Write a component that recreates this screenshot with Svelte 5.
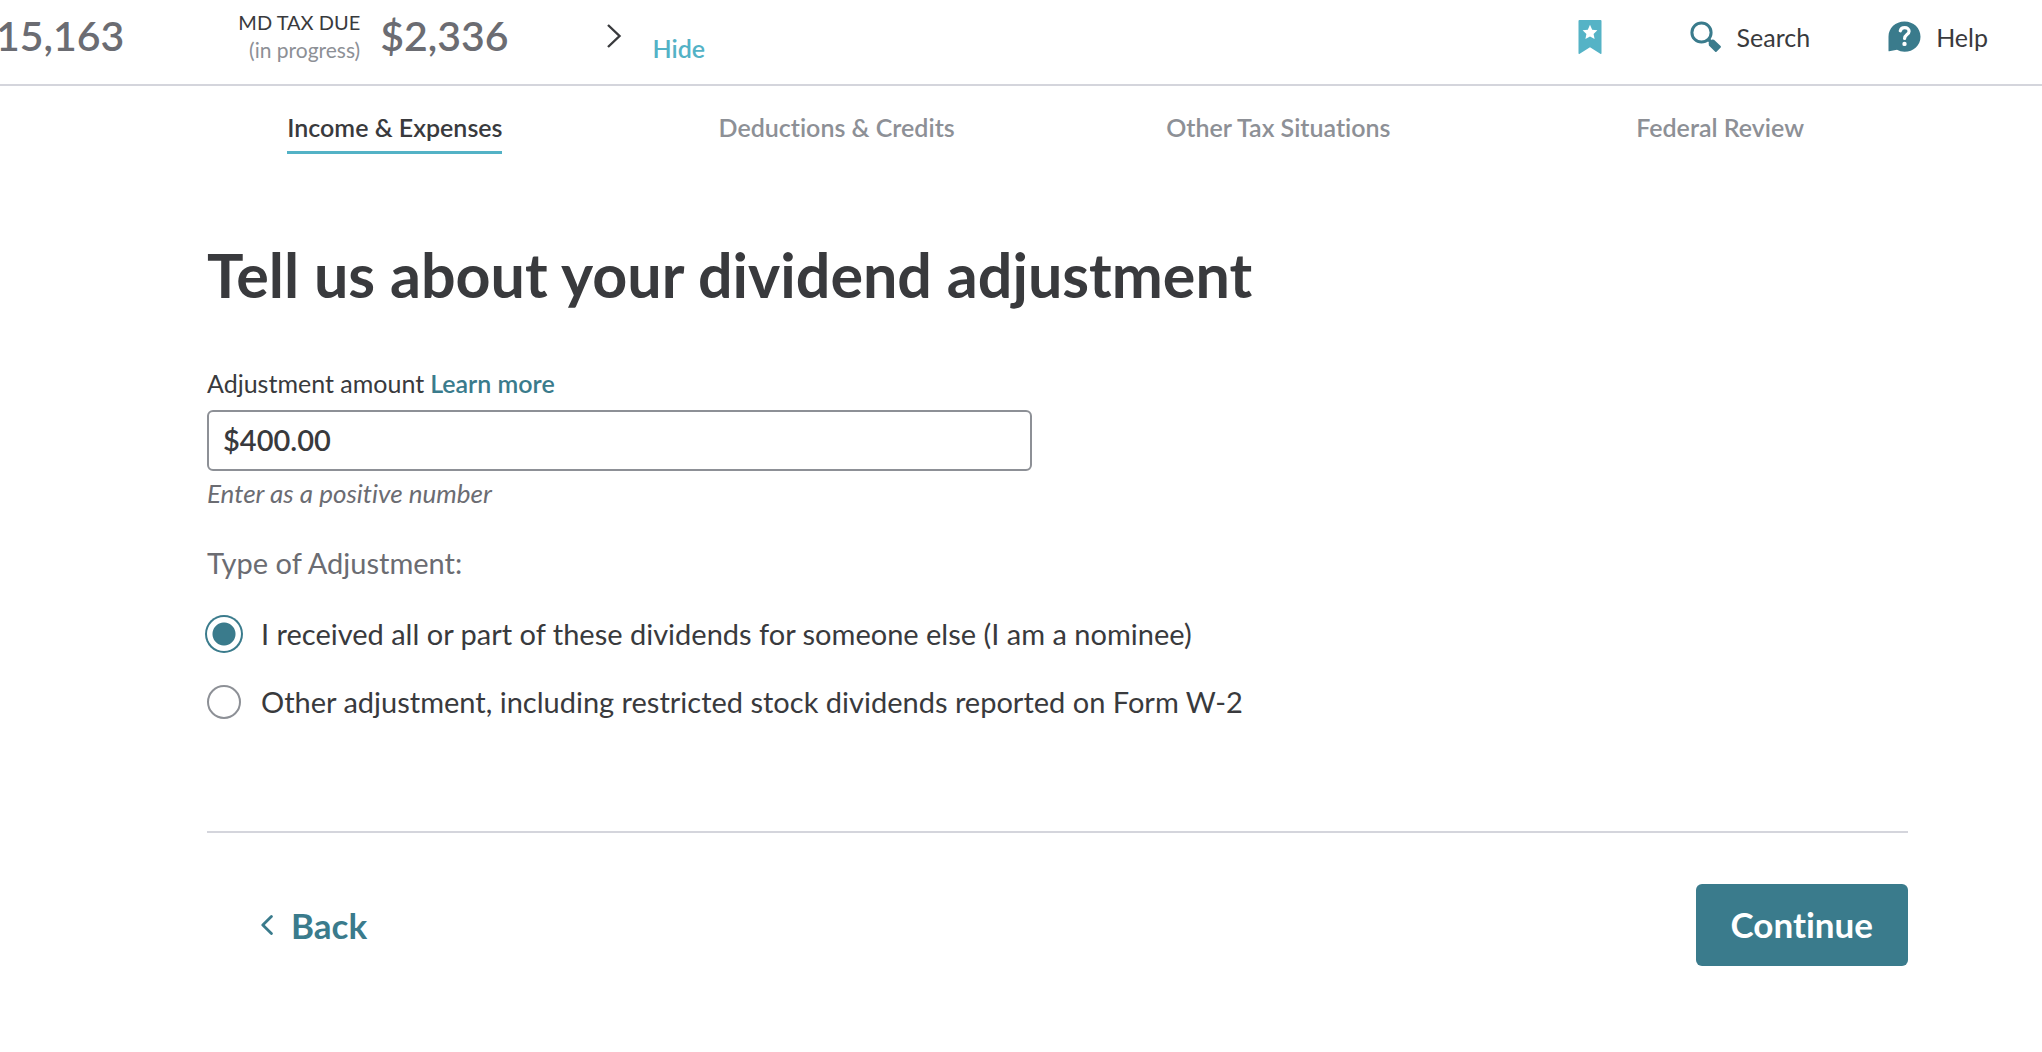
<script>
  const tabs = ['Income & Expenses', 'Deductions & Credits', 'Other Tax Situations', 'Federal Review'];
  const types = [
    { value: 'nominee', label: 'I received all or part of these dividends for someone else (I am a nominee)' },
    { value: 'other', label: 'Other adjustment, including restricted stock dividends reported on Form W-2' }
  ];

  let activeTab = $state(tabs[0]);
  let amount = $state('$400.00');
  let adjustmentType = $state('nominee');
</script>

<header class="topbar">
  <div class="totals">
    <span class="amount">15,163</span>
    <div class="state-tax">
      <div class="caption">
        <span class="caption-title">MD TAX DUE</span>
        <span class="caption-note">(in progress)</span>
      </div>
      <span class="amount">$2,336</span>
    </div>
    <button class="next" aria-label="Next">
      <svg width="16" height="26" viewBox="0 0 16 26" fill="none" stroke="#393a3d" stroke-width="2.4">
        <path d="M2 2 L13.5 13 L2 24" />
      </svg>
    </button>
    <button class="hide">Hide</button>
  </div>

  <div class="tools">
    <button class="tool bookmark" aria-label="Bookmark">
      <svg width="24" height="34" viewBox="0 0 24 34">
        <path fill="#55b3c6" d="M1.5 0h21a1 1 0 0 1 1 1v32.2a.8.8 0 0 1-1.2.6L12 27.2 1.7 33.8a.8.8 0 0 1-1.2-.6V1a1 1 0 0 1 1-1z" />
        <path fill="#fff" d="M12 4.8l2.2 4.9 5.2.6-3.8 3.6 1 5.2-4.6-2.6-4.6 2.6 1-5.2-3.8-3.6 5.2-.6z" />
      </svg>
    </button>
    <button class="tool">
      <svg width="32" height="32" viewBox="0 0 32 32" fill="none" stroke="#3a7b8c">
        <circle cx="11.5" cy="11.5" r="9.6" stroke-width="3" />
        <path stroke-width="3.4" d="M18 18l3 3" />
        <path fill="#3a7b8c" stroke="none" d="M18.6 21.8l3.4-3.3 2 .3 6.6 6.3c.5.4.5.9.1 1.3l-4.2 4.4c-.4.4-.9.4-1.3 0l-6.3-6.4z" />
      </svg>
      <span>Search</span>
    </button>
    <button class="tool">
      <svg width="33" height="32" viewBox="0 0 33 32">
        <path fill="#3a7b8c" d="M16.5.5c9 0 16 6.5 16 15.2s-7 15-16 15c-2.8 0-5.2-.7-7.500-1.900l-7.800 1.500c-.4.1-.7-.2-.7-.6v-14C.5 7 7.500.5 16.500.5z" />
        <path fill="none" stroke="#fff" stroke-width="3.2" stroke-linecap="round" d="M12.300 9.800c.5-2.200 2.200-3.200 4.400-3.200 2.600 0 4.400 1.500 4.400 3.700 0 3.300-4.500 3.400-4.500 7.200" />
        <circle cx="16.5" cy="22.9" r="2.2" fill="#fff" />
      </svg>
      <span>Help</span>
    </button>
  </div>
</header>

<nav class="tabs">
  {#each tabs as tab}
    <button class="tab" class:active={tab === activeTab} onclick={() => (activeTab = tab)}>{tab}</button>
  {/each}
</nav>

<main>
  <h1>Tell us about your dividend adjustment</h1>

  <div class="label-row">
    <label for="amount">Adjustment amount</label>
    <a href="#learn">Learn more</a>
  </div>
  <input id="amount" class="text-input" type="text" bind:value={amount} aria-describedby="amount-hint" />
  <p id="amount-hint" class="hint">Enter as a positive number</p>

  <fieldset>
    <legend>Type of Adjustment:</legend>
    {#each types as type}
      <label class="option">
        <input type="radio" name="type" value={type.value} bind:group={adjustmentType} />
        <span>{type.label}</span>
      </label>
    {/each}
  </fieldset>

  <div class="actions">
    <button class="back">
      <svg width="12" height="20" viewBox="0 0 12 20" fill="none" stroke="#3a7b8c" stroke-width="2.8" stroke-linecap="round" stroke-linejoin="round">
        <path d="M10.4 1.6L1.8 10l8.6 8.4" />
      </svg>
      Back
    </button>
    <button class="continue">Continue</button>
  </div>
</main>

<style>
  :global(body) {
    background: #fff;
    color: #393a3d;
    font-family: Lato, "Liberation Sans", sans-serif;
    font-size: 25px;
    font-variant-ligatures: none;
    line-height: 32px;
  }

  button {
    display: flex;
    align-items: center;
    padding: 0;
    border: none;
    background: none;
    color: inherit;
    font: inherit;
    font-variant-ligatures: none;
    white-space: nowrap;
    cursor: pointer;
  }

  .topbar {
    display: flex;
    justify-content: space-between;
    height: 84px;
    border-bottom: 2px solid #d4d5dc;
  }

  .totals {
    display: flex;
    align-items: center;
    height: 72px;
    margin-left: -4px;
  }

  .amount {
    color: #6b6c72;
    font-size: 41px;
    font-weight: 600;
  }

  .state-tax {
    display: flex;
    align-items: center;
    gap: 20px;
    margin-left: 114px;
  }

  .caption {
    display: flex;
    flex-direction: column;
    align-items: flex-end;
    font-size: 20px;
    line-height: 28px;
  }

  .caption-note {
    color: #8d9096;
    font-size: 21px;
  }

  .next {
    margin-left: 97px;
  }

  .hide {
    margin-top: 24px;
    margin-left: 31px;
    color: #53b2c6;
    font-weight: 600;
  }

  .tools {
    display: flex;
    align-items: center;
    gap: 78px;
    height: 74px;
    padding-right: 54px;
  }

  .tool {
    gap: 15px;
  }

  .bookmark {
    margin-right: 10px;
  }

  .tabs {
    display: grid;
    grid-template-columns: repeat(4, 1fr);
    justify-items: center;
    margin: 25px 101px 0 174px;
  }

  .tab {
    padding-bottom: 8px;
    border-bottom: 3px solid transparent;
    color: #8d9096;
    font-weight: 600;
  }

  .tab.active {
    border-color: #53b2c6;
    color: #393a3d;
  }

  main {
    margin: 85px 134px 0 207px;
  }

  h1 {
    margin: 0 0 56px;
    font-size: 61px;
    line-height: 72px;
    font-weight: 700;
  }

  .label-row {
    display: flex;
    gap: 6px;
    margin-bottom: 11px;
  }

  a {
    color: #3a7b8c;
    font-weight: 600;
    text-decoration: none;
  }

  .text-input {
    display: block;
    box-sizing: border-box;
    width: 100%;
    max-width: 825px;
    height: 61px;
    padding: 0 14px 3px;
    border: 2px solid #8d9096;
    border-radius: 6px;
    color: #393a3d;
    font: inherit;
    font-size: 29px;
    font-weight: 600;
  }

  .hint {
    margin: 6px 0 36px;
    color: #6b6c72;
    font-size: 26px;
    font-style: italic;
  }

  fieldset {
    margin: 0;
    padding: 0;
    border: none;
    font-size: 29px;
    line-height: 36px;
  }

  legend {
    padding: 0;
    color: #6b6c72;
  }

  .option {
    display: flex;
    align-items: center;
    gap: 20px;
    margin-top: 32px;
  }

  legend + .option {
    margin-top: 35px;
  }

  input[type="radio"] {
    flex: none;
    box-sizing: border-box;
    width: 34px;
    height: 34px;
    margin: 0;
    border: 2px solid #8d9096;
    border-radius: 50%;
    appearance: none;
  }

  input[type="radio"]:checked {
    border: none;
    background: radial-gradient(circle, #3a7b8c 11px, transparent 12px);
    box-shadow: 0 0 0 2px #3a7b8c;
  }

  .actions {
    display: flex;
    justify-content: space-between;
    align-items: center;
    margin-top: 111px;
    padding-top: 51px;
    border-top: 2px solid #d4d5dc;
  }

  .back,
  .continue {
    font-size: 35px;
    line-height: 40px;
    font-weight: 700;
  }

  .back {
    gap: 18px;
    margin-left: 54px;
    color: #3a7b8c;
  }

  .continue {
    padding: 20px 35px 22px;
    border-radius: 6px;
    background: #3a7b8c;
    color: #fff;
  }
</style>
